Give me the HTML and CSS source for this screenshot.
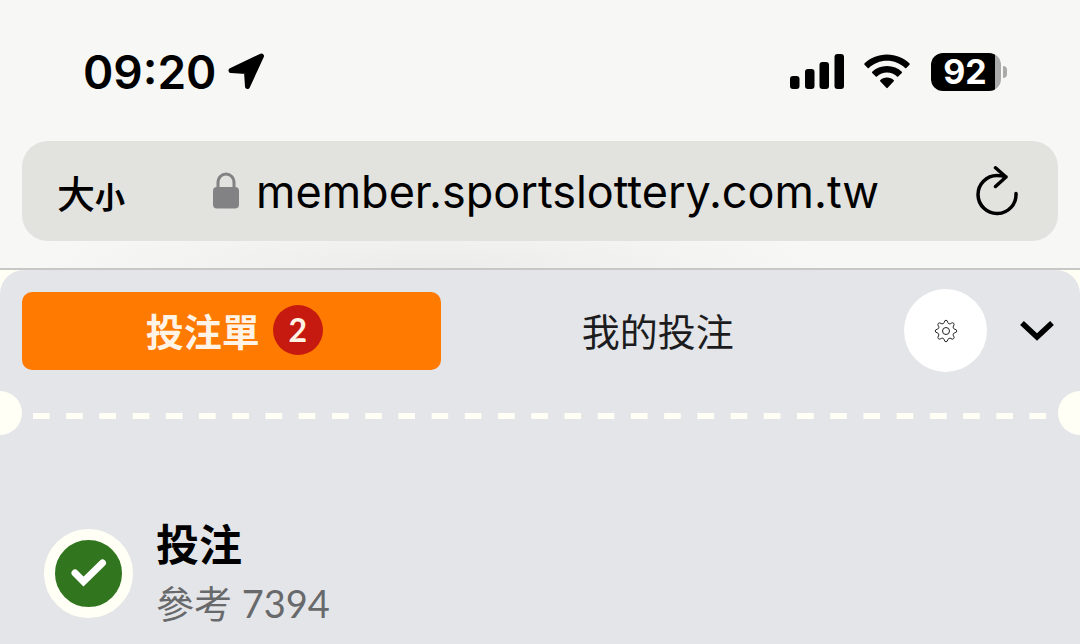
FILE: index.html
```html
<!DOCTYPE html>
<html lang="zh-Hant">
<head>
  <meta charset="UTF-8" />
  <meta name="viewport" content="width=device-width, initial-scale=1.0" />
  <title>投注單</title>
  <link rel="stylesheet" href="styles.css">
</head>
<body>

  <header class="browser">
    <div class="status">
      <span class="time">09:20</span>
      <svg width="38" height="38" viewBox="0 0 38 38" aria-hidden="true">
        <path d="M3 17.500 33.500 3 19.500 33.500 18.500 18.500Z" stroke="#000" stroke-width="5" stroke-linejoin="round" />
      </svg>
      <div class="signals">
        <svg width="54" height="36" viewBox="0 0 54 36" aria-hidden="true">
          <rect x="0" y="22" width="9.500" height="13" rx="3" />
          <rect x="15" y="15" width="9.500" height="20" rx="3" />
          <rect x="29.500" y="8" width="9.500" height="27" rx="3" />
          <rect x="44.500" y="0" width="9.500" height="35" rx="3" />
        </svg>
        <svg class="wifi" width="46" height="36" viewBox="0 0 46 36" aria-hidden="true">
          <path d="M23 0.500C14 0.500 6 4 0.400 9.600Q0 10.200 0.500 10.800L3.700 14Q4.300 14.400 4.900 13.900C9.700 9.500 16 6.800 23 6.800S36.300 9.500 41.100 13.900Q41.700 14.400 42.300 14L45.500 10.800Q46 10.200 45.600 9.600C40 4 32 0.500 23 0.500Z" />
          <path d="M23 12C17 12 12 14.200 8.200 17.800Q7.700 18.400 8.200 18.900L11.800 22.500Q12.400 23 13 22.500C15.700 20 19.200 18.500 23 18.500S30.300 20 33 22.500Q33.600 23 34.200 22.500L37.800 18.900Q38.300 18.400 37.800 17.800C34 14.200 29 12 23 12Z" />
          <path d="M23 23.500C20.200 23.500 18 24.600 16.200 26.200Q15.700 26.800 16.200 27.300L22.300 33.800Q23 34.500 23.700 33.800L29.800 27.300Q30.300 26.800 29.800 26.200C28 24.600 25.800 23.500 23 23.500Z" />
        </svg>
        <div class="battery"><span class="level">92</span></div>
      </div>
    </div>

    <form class="address">
      <button type="button" class="text-size" aria-label="文字大小">大<small>小</small></button>
      <svg class="lock" width="26" height="38" viewBox="0 0 26 38" aria-hidden="true">
        <path d="M5 17V11C5 -1 21 -1 21 11V17" fill="none" stroke="#828285" stroke-width="3" />
        <rect x="0" y="15" width="26" height="21.500" rx="4" fill="#828285" />
      </svg>
      <input type="text" class="url" aria-label="網址" value="member.sportslottery.com.tw" />
      <button type="button" class="reload" aria-label="重新載入">
        <svg width="42" height="50" viewBox="0 0 42 50" aria-hidden="true">
          <path d="M40 27.500A19 19 0 1 1 21 9.500Q26 9.500 30 11M19.500 1.800 30 11 19.500 20.500" fill="none" stroke="#000" stroke-width="3.500" stroke-linecap="round" stroke-linejoin="round" />
        </svg>
      </button>
    </form>
  </header>

  <main class="slip">
    <nav class="tabs">
      <button type="button" class="tab active">投注單<span class="count">2</span></button>
      <button type="button" class="tab">我的投注</button>
      <button type="button" class="settings" aria-label="設定">
        <svg width="24" height="24" viewBox="0 0 24 24" fill="none" stroke="#222" stroke-linejoin="round" aria-hidden="true">
          <path d="M10.200 3.500Q10.600 1.200 12 1.200T13.800 3.500Q14.100 4.700 15.200 4.900T17.200 4.200Q18.800 3.300 19.700 4.300T19.500 7Q18.900 7.900 19.300 8.900T20.700 10.200Q22.800 10.600 22.800 12T20.700 13.800Q19.500 14.100 19.200 15.200T19.700 17.100Q20.600 18.800 19.600 19.700T17 19.600Q16.100 18.900 15.100 19.300T13.800 20.700Q13.400 22.800 12 22.800T10.200 20.700Q9.900 19.500 8.800 19.200T6.900 19.700Q5.200 20.600 4.300 19.600T4.400 17Q5.100 16.100 4.700 15.100T3.300 13.800Q1.200 13.400 1.200 12T3.300 10.200Q4.500 9.900 4.800 8.800T4.300 6.900Q3.400 5.200 4.400 4.300T7 4.400Q7.900 5.100 8.900 4.700T10.200 3.500Z" />
          <circle cx="12" cy="12" r="3.500" />
        </svg>
      </button>
      <button type="button" class="collapse" aria-label="收合">
        <svg width="34" height="20" viewBox="0 0 34 20" aria-hidden="true">
          <path d="M2 2 17 16 32 2" fill="none" stroke="#000" stroke-width="5.500" />
        </svg>
      </button>
    </nav>

    <div class="tear"></div>

    <section class="receipt">
      <div class="check">
        <svg width="36" height="28" viewBox="0 0 36 28" aria-hidden="true">
          <path d="M4 14 12.500 22.500 31.500 4" fill="none" stroke="#fff" stroke-width="7" stroke-linecap="round" />
        </svg>
      </div>
      <div>
        <h1>投注</h1>
        <p>參考 7394</p>
      </div>
    </section>
  </main>

</body>
</html>
```

FILE: styles.css
```css
* {
  box-sizing: border-box;
}
body {
  margin: 0;
  font-family: Lato, "Noto Sans CJK TC", sans-serif;
  background-color: #fffff5;
  color: #000;
}
button {
  display: flex;
  align-items: center;
  justify-content: center;
  padding: 0;
  border: 0;
  background: none;
  font-family: inherit;
  color: inherit;
  cursor: pointer;
}
svg {
  display: block;
  flex: none;
}

/* browser bar */
.browser {
  padding: 44px 22px 27px;
  border-bottom: 2px solid #c7c7c5;
  background: radial-gradient(ellipse 400px 60px at 40% 100%, #ececea, #f7f7f5);
  font-family: Inter, "Noto Sans CJK TC", sans-serif;
}
.status {
  display: flex;
  align-items: center;
  height: 56px;
  margin-bottom: 41px;
  padding: 0 51px 0 61px;
}
.time {
  margin-right: 12px;
  font-size: 46px;
  font-weight: 600;
}
.signals {
  display: flex;
  align-items: center;
  margin-left: auto;
}
.wifi {
  margin: 0 21px 0 20px;
}
.battery {
  display: flex;
  align-items: center;
}
.level {
  width: 70px;
  height: 38px;
  padding-right: 2px;
  border-radius: 12px;
  background: linear-gradient(to right, #000 64px, #aaa 64px);
  color: #fff;
  font-size: 34px;
  font-weight: 700;
  line-height: 38px;
  text-align: center;
}
.battery::after {
  content: "";
  width: 4px;
  height: 12px;
  margin-left: 2px;
  border-radius: 0 6px 6px 0;
  background-color: #aaa;
}
.address {
  display: flex;
  align-items: center;
  height: 100px;
  padding: 0 40px 0 35px;
  border-radius: 26px;
  background-color: #e2e2df;
}
.text-size {
  align-items: baseline;
  font-size: 38px;
  font-weight: 500;
}
.text-size small {
  font-size: 30px;
  font-weight: 700;
}
.lock {
  margin: 0 17px 0 auto;
}
.url {
  width: 632px;
  padding: 0;
  border: 0;
  background: none;
  font-family: inherit;
  font-size: 45px;
  color: #000;
}
.reload {
  margin-left: auto;
}

/* bet slip */
.slip {
  min-height: 374px;
  border-radius: 24px 24px 0 0;
  background-color: #e4e5e8;
}
.tabs {
  display: flex;
  align-items: center;
  padding: 19px 26px 0 22px;
}
.tab {
  flex: 1;
  height: 78px;
  padding: 0 3px 2px;
  border-radius: 10px;
  color: #1c1c1e;
  font-size: 38px;
}
.tab + .tab {
  margin-left: 8px;
}
.tab.active {
  padding: 0 0 2px 6px;
  background-color: #ff7a00;
  color: #fff3e6;
  font-weight: 700;
}
.count {
  width: 50px;
  height: 50px;
  margin-left: 13px;
  border-radius: 50%;
  background-color: #c6190f;
  font-size: 32px;
  line-height: 50px;
}
.settings {
  width: 83px;
  height: 83px;
  margin: 0 33px 0 37px;
  border-radius: 50%;
  background-color: #fff;
}

/* perforated line with a half hole at each end */
.tear {
  display: flex;
  align-items: center;
  justify-content: space-between;
  height: 44px;
  margin-top: 19px;
  padding: 0 17px 0 33px;
  overflow: hidden;
  background: linear-gradient(to right, #fffff5 50%, transparent 50%) 0 22px / 33px 6px round no-repeat content-box;
}
.tear::before,
.tear::after {
  content: "";
  flex: none;
  width: 44px;
  height: 44px;
  border-radius: 50%;
  background-color: #fffff5;
}
.tear::before {
  margin-left: -55px;
}
.tear::after {
  margin-right: -39px;
}

.receipt {
  display: flex;
  align-items: center;
  padding: 80px 44px 8px;
}
.check {
  display: flex;
  align-items: center;
  justify-content: center;
  width: 89px;
  height: 89px;
  margin-right: 23px;
  border: 11px solid #fffff5;
  border-radius: 50%;
  background-color: #31751f;
}
h1 {
  margin: 0;
  font-size: 43px;
  font-weight: 700;
  line-height: 60px;
}
.receipt p {
  margin: 0;
  color: #68696b;
  font-size: 38px;
  line-height: 56px;
}
```
